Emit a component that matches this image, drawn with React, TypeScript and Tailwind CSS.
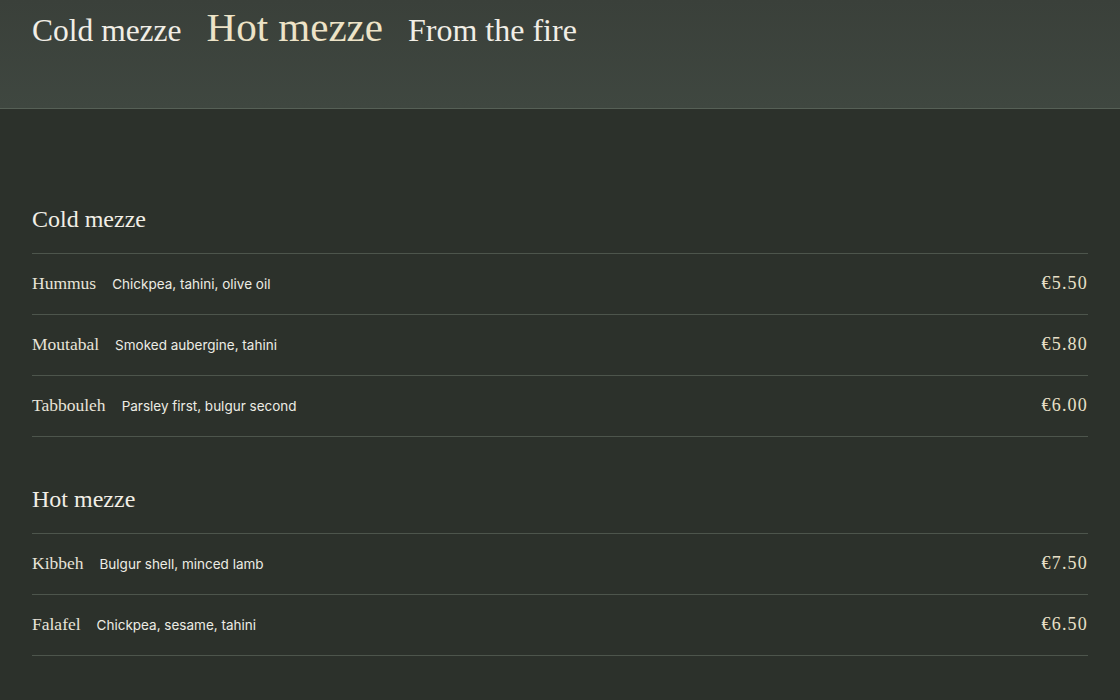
import React from 'react';

type Item = { name: string; desc: string; price: string };
type Section = { title: string; items: Item[] };

const sections: Section[] = [
  {
    title: 'Cold mezze',
    items: [
      { name: 'Hummus', desc: 'Chickpea, tahini, olive oil', price: '€5.50' },
      { name: 'Moutabal', desc: 'Smoked aubergine, tahini', price: '€5.80' },
      { name: 'Tabbouleh', desc: 'Parsley first, bulgur second', price: '€6.00' },
    ],
  },
  {
    title: 'Hot mezze',
    items: [
      { name: 'Kibbeh', desc: 'Bulgur shell, minced lamb', price: '€7.50' },
      { name: 'Falafel', desc: 'Chickpea, sesame, tahini', price: '€6.50' },
    ],
  },
];

const serif = "font-['Liberation_Serif',serif]";

const App: React.FC = () => {
  return (
    <div className="min-h-[700px] bg-[#2c312b]">
      <header className="h-[109px] border-b border-[#566056] bg-gradient-to-b from-[#3a403a] to-[#3f4740] px-8">
        <nav className={`flex items-baseline gap-[25px] pt-[5px] ${serif}`}>
          <a className="text-[31.5px] leading-[44px] text-[#f1eee6]">Cold mezze</a>
          <a className="text-[41px] leading-[44px] text-[#ede3c7]">Hot mezze</a>
          <a className="text-[32px] leading-[44px] text-[#f1eee6]">From the fire</a>
        </nav>
      </header>

      <main className="px-8 pt-[94px] pb-10">
        {sections.map((section, si) => (
          <section key={section.title} className={si > 0 ? 'mt-[46px]' : ''}>
            <h2 className={`${serif} mb-[18px] text-[24px] leading-8 text-[#f1eee6]`}>{section.title}</h2>
            <ul className="border-t border-[#4d554c]">
              {section.items.map(item => (
                <li key={item.name} className="flex h-[61px] items-center justify-between border-b border-[#4d554c] pb-[2px]">
                  <div className="flex items-baseline gap-[16px]">
                    <span className={`${serif} text-[17.5px] text-[#e8e4d9]`}>{item.name}</span>
                    <span className="font-['Inter',sans-serif] text-[13.5px] text-[#ececE4]">{item.desc}</span>
                  </div>
                  <span className={`${serif} text-[18px] tracking-[1.2px] text-[#e9e0c8]`}>{item.price}</span>
                </li>
              ))}
            </ul>
          </section>
        ))}
      </main>
    </div>
  );
};

export default App;
